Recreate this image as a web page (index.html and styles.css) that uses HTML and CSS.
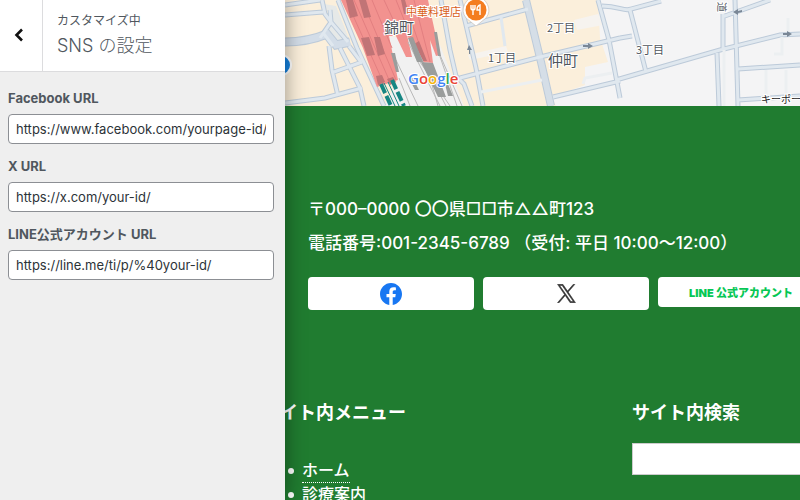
FILE: index.html
```html
<!DOCTYPE html>
<html lang="ja">
<head>
<meta charset="utf-8">
<title>SNS の設定</title>
<link rel="stylesheet" href="styles.css">
</head>
<body>
<div class="customizer">
  <aside class="panel">
    <header class="panel-head">
      <button class="back" type="button" aria-label="戻る">
        <svg width="10" height="14" viewBox="0 0 10 14"><path d="M8 1.5 2.5 7 8 12.5" fill="none" stroke="#111" stroke-width="2.6"/></svg>
      </button>
      <div class="panel-title">
        <span class="crumb">カスタマイズ中</span>
        <h1>SNS の設定</h1>
      </div>
    </header>
    <form class="fields">
      <label for="facebook">Facebook URL</label>
      <input id="facebook" type="text" value="https://www.facebook.com/yourpage-id/">
      <label for="x">X URL</label>
      <input id="x" type="text" value="https://x.com/your-id/">
      <label for="line">LINE公式アカウント URL</label>
      <input id="line" type="text" value="https://line.me/ti/p/%40your-id/">
    </form>
  </aside>

  <main class="preview">
    <svg class="map" viewBox="285 0 515 106" preserveAspectRatio="xMinYMin slice" role="img" aria-label="地図">
      <rect x="285" width="515" height="106" fill="#fbefdb"/>
      <!-- grey districts -->
      <path d="M598 0H800V106H556L552 97 585 85V67L608 62 600 38Z" fill="#f4f4f5"/>
      <path d="M574 20 598 14 603 25 577 30ZM468 55 506 46 508 52 470 60Z" fill="#f6f3ef"/>
      <path d="M389 36 440 45 464 106H384L398 80Z" fill="#f1f1f1"/>
      <path d="M324 4 336 6 351 44 331 46 322 34 332 20Z" fill="#e6e9e8"/>
      <!-- roads, casing then surface -->
      <g fill="none" stroke="#bccad9">
        <path stroke-width="9" d="M285 42C300 42 315 39 327 34L336 45 350 42"/>
        <path stroke-width="5" d="M322 0 325 14 331 22M338 0 357 48 384 106M320 0 285 5M323 12 285 15M320 38 331 22 330 10M331 22 348 42M324 34 333 46"/>
        <path stroke-width="5" d="M329 46 332 70 338 96M340 48 360 88 364 106M349 46 361 62M334 72 362 62M285 103 325 98 362 88"/>
        <path stroke-width="8" d="M526 0 541 62 551 106"/>
        <path stroke-width="5" d="M441 0 450 50 456 76 464 84 472 106M460 0 466 25 476 68 483 106M466 26 528 9M460 78 540 57 620 38M598 0 609 40 620 98M616 80 720 50 780 35 800 34M553 97 620 81M602 6C620 6 624 12 631 9L661 1M630 10 646 72M620 38 632 36"/>
        <path stroke-width="5" d="M723 14V50M735 0 738 106M722 17 770 0M738 69 800 65M738 100 800 96M717 53 719 106"/>
      </g>
      <g fill="none" stroke="#e0e8ef">
        <path stroke-width="7" stroke="#d3dde8" d="M285 42C300 42 315 39 327 34L336 45 350 42"/>
        <path stroke-width="3" d="M322 0 325 14 331 22M338 0 357 48 384 106M320 0 285 5M323 12 285 15M320 38 331 22 330 10M331 22 348 42M324 34 333 46"/>
        <path stroke-width="3" d="M329 46 332 70 338 96M340 48 360 88 364 106M349 46 361 62M334 72 362 62M285 103 325 98 362 88"/>
        <path stroke-width="6" stroke="#d5dee7" d="M526 0 541 62 551 106"/>
        <path stroke-width="3" d="M441 0 450 50 456 76 464 84 472 106M460 0 466 25 476 68 483 106M466 26 528 9M460 78 540 57 620 38M598 0 609 40 620 98M616 80 720 50 780 35 800 34M553 97 620 81M602 6C620 6 624 12 631 9L661 1M630 10 646 72M620 38 632 36M723 14V50M735 0 738 106M722 17 770 0M738 69 800 65M738 100 800 96M717 53 719 106"/>
        <path stroke-width="3" d="M501 17 505 46"/>
        <path stroke="#eceff1" stroke-width="3" d="M481 92 542 80M583 84 585 78 612 73M766 70V98M786 70V96M782 37V54H774M788 18V32M724 50V106"/>
      </g>
      <!-- railway yard -->
      <path d="M341 0H428L440 55 436 56 430 40 433 63 421 62 407 35 412 57 406 57 396 36 389 36 398 80 377 87 363 48Z" fill="#f2928f"/>
      <g fill="none" stroke="#e27f80" stroke-width="1">
        <path d="M346 0 384 84M354 0 390 82M362 0 396 80M372 0 392 48M384 0 398 30M404 0 425 61M414 0 430 62M396 0 418 54"/>
      </g>
      <g fill="#c17476">
        <path d="M346 0H353L358 16 350 18ZM359 0H366L371 17 364 18ZM361 38 369 37 375 55 367 56ZM374 37 380 37 385 54 378 56ZM376 76 382 75 385 82 378 85ZM387 79 393 77 396 82 390 85ZM401 0H405L409 14 404 14ZM414 44 419 41 427 61H422Z"/>
      </g>
      <g fill="none" stroke="#b9b9b9" stroke-width="1">
        <path d="M396 60 418 106M408 42 440 106M413 42 446 106M420 62 450 106M436 45 457 106M440 55 462 106M399 78 410 106M426 64 438 106"/>
      </g>
      <g fill="#9a9d9c">
        <path d="M408 38 413 37 423 62H417ZM391 53 395 53 399 72 396 72ZM434 32 437 32 441 56H438ZM421 62 433 63 446 97 438 97ZM445 84 448 84 453 96 448 96ZM409 78 413 78 419 90 415 90Z"/>
      </g>
      <g fill="none" stroke="#168683" stroke-width="4">
        <path stroke-dasharray="10 3" d="M381 84 391 106M392 80 404 106"/>
        <path stroke-width="1" d="M384 83 395 106M388 82 399 106"/>
      </g>
      <!-- one-way arrows -->
      <g fill="#7a8796"><path d="M583 45H588V43L593 46 588 49V47H583ZM469 54V50H467L469 45 472 50H470V54ZM733 12 738 9V11L742 10V12L738 13V15ZM783 33H787V31L792 34 787 37V35H783Z"/></g>
      <circle cx="281" cy="65" r="11" fill="#fff"/><circle cx="281" cy="65" r="9" fill="#1683e0"/>
      <!-- restaurant pin -->
      <path d="M476-3A13 13 0 0 1 486 18L476 26 466 18A13 13 0 0 1 476-3Z" fill="#fff" stroke="#c9b9a9" stroke-width=".6"/>
      <circle cx="476" cy="10" r="10.5" fill="#f47d20"/>
      <path d="M471 5V8Q471 10 473 10V15M473 5V10M475 5V8Q475 10 473 10M480 15V5Q477 6 477 10H480" fill="none" stroke="#fff" stroke-width="1.4"/>
      <g class="place">
        <text class="food" x="406" y="16">中華料理店</text>
        <text class="town" x="384" y="33">錦町</text>
        <text class="town" x="548" y="66">仲町</text>
        <text x="488" y="62">1丁目</text>
        <text x="547" y="32">2丁目</text>
        <text x="636" y="54">3丁目</text>
        <text class="street" transform="translate(718 2) rotate(90)">道</text>
        <text class="shop" x="761" y="103">キーポー</text>
      </g>
      <text class="google" x="408" y="84"><tspan fill="#4285f4">G</tspan><tspan fill="#ea4335">o</tspan><tspan fill="#f5b50b">o</tspan><tspan fill="#4285f4">g</tspan><tspan fill="#34a853">l</tspan><tspan fill="#ea4335">e</tspan></text>
    </svg>

    <footer class="site">
      <address>
        <p>〒000–0000 〇〇県<span class="sym">□□</span>市<span class="sym">△△</span>町123</p>
        <p>電話番号:001-2345-6789 （受付: 平日 10:00〜12:00）</p>
      </address>
      <nav class="social">
        <a href="#facebook" aria-label="Facebook">
          <svg width="22" height="22" viewBox="0 0 24 24"><path fill="#1877f2" d="M24 12.07C24 5.4 18.63 0 12 0S0 5.4 0 12.07C0 18.1 4.39 23.1 10.13 24v-8.44H7.08v-3.49h3.05V9.41c0-3.02 1.79-4.69 4.53-4.69 1.31 0 2.68.24 2.68.24v2.97h-1.51c-1.49 0-1.96.93-1.96 1.89v2.25h3.33l-.53 3.49h-2.8V24C19.61 23.1 24 18.1 24 12.07Z"/></svg>
        </a>
        <a href="#x" aria-label="X">
          <svg width="19" height="19" viewBox="-20 -20 1240 1267"><path fill="#333" stroke="#333" stroke-width="36" d="M714.163 519.284 1160.89 0H1055.03L667.137 450.887 357.328 0H0L468.492 681.821 0 1226.37H105.866L515.491 750.218 842.672 1226.37H1200L714.137 519.284H714.163ZM569.165 687.828 521.697 619.934 144.011 79.694H306.615L611.412 515.685 658.88 583.579 1055.08 1150.3H892.476L569.165 687.854V687.828Z"/></svg>
        </a>
        <a class="line" href="#line">LINE 公式アカウント</a>
      </nav>
      <div class="columns">
        <section>
          <h2>サイト内メニュー</h2>
          <ul>
            <li><a href="#home">ホーム</a></li>
            <li><a href="#guide">診療案内</a></li>
          </ul>
        </section>
        <section>
          <h2><label for="search">サイト内検索</label></h2>
          <input id="search" type="search">
        </section>
      </div>
    </footer>
  </main>
</div>
</body>
</html>
```
FILE: styles.css
```css
* { box-sizing: border-box; }

body {
  margin: 0;
  font-family: Inter, "Noto Sans CJK JP", sans-serif;
}

h1, h2, p, ul { margin: 0; }

.customizer {
  display: flex;
  height: 100vh;
  overflow: hidden;
}

/* settings panel */
.panel {
  position: relative;
  z-index: 1;
  flex: 0 0 285px;
  background: #efefef;
  color: #50575e;
  box-shadow: 0 0 20px rgba(0, 0, 0, .4);
}

.panel-head {
  display: flex;
  height: 72px;
  background: #fff;
  border-bottom: 1px solid #dcdcde;
}

.back {
  flex: 0 0 43px;
  padding: 0 5px 2px 0;
  border: 0;
  border-right: 1px solid #dcdcde;
  background: #fff;
}

.back svg { vertical-align: middle; }

.panel-title { padding: 10px 14px; }

.crumb {
  display: block;
  font-size: 12px;
  line-height: 22px;
}

h1 {
  font-size: 18px;
  font-weight: 300;
  line-height: 28px;
}

.fields {
  display: grid;
  padding: 15px 11px 15px 8px;
}

.fields label {
  font-size: 13px;
  font-weight: 700;
  line-height: 22px;
}

.fields input {
  width: 100%;
  height: 30px;
  margin: 5px 0 11px;
  padding: 0 7px;
  border: 1px solid #8c8f94;
  border-radius: 4px;
  background: #fff;
  color: #2c3338;
  font: 13px Inter, sans-serif;
}

/* site preview */
.preview {
  flex: 1;
  min-width: 0;
  overflow: hidden;
  background: #207c30;
  color: #fff;
}

.map {
  display: block;
  width: 100%;
  height: 106px;
}

.place {
  fill: #50565d;
  stroke: #fff;
  stroke-width: 2px;
  paint-order: stroke;
  font: 11px "Noto Sans CJK JP", sans-serif;
}

.place .town { font-size: 15px; }
.place .food { fill: #d9601a; }
.place .shop { fill: #222; font-size: 10px; }
.place .street { font-size: 10px; }

.google {
  font: 600 15px "Open Sans", sans-serif;
  stroke: #fff;
  stroke-width: 2px;
  paint-order: stroke;
}

.site { padding: 86px 0 0 23px; }

address {
  font-size: 17px;
  font-style: normal;
  font-weight: 500;
  line-height: 34px;
  white-space: nowrap;
}

.sym { font-family: Inter, "DejaVu Sans", sans-serif; }

.social {
  display: grid;
  grid-template-columns: repeat(3, 166px);
  align-items: start;
  gap: 9px;
  margin-top: 17px;
}

.social a {
  display: flex;
  align-items: center;
  justify-content: center;
  height: 33px;
  border-radius: 4px;
  background: #fff;
}

.social .line {
  height: 30px;
  color: #06c755;
  font-size: 11px;
  font-weight: 900;
  text-decoration: none;
}

.columns {
  display: grid;
  grid-template-columns: repeat(2, 340px);
  gap: 30px;
  margin: 90px 0 0 -46px;
}

h2 {
  font-size: 18px;
  font-weight: 700;
  line-height: 26px;
}

.columns ul {
  margin-top: 33px;
  padding-left: 26px;
  list-style: none;
  font-size: 16px;
  font-weight: 500;
  line-height: 24px;
}

.columns li {
  display: flex;
  align-items: center;
  gap: 8px;
}

.columns li::before {
  content: "";
  width: 6px;
  height: 6px;
  border-radius: 50%;
  background: #fff;
}

.columns a {
  color: #fff;
  line-height: 23px;
  text-decoration: none;
  border-bottom: 1px dotted #fff;
}

.columns input {
  display: block;
  width: 100%;
  height: 32px;
  margin-top: 17px;
  border: 1px solid #ccc;
  background: #fff;
}
```
